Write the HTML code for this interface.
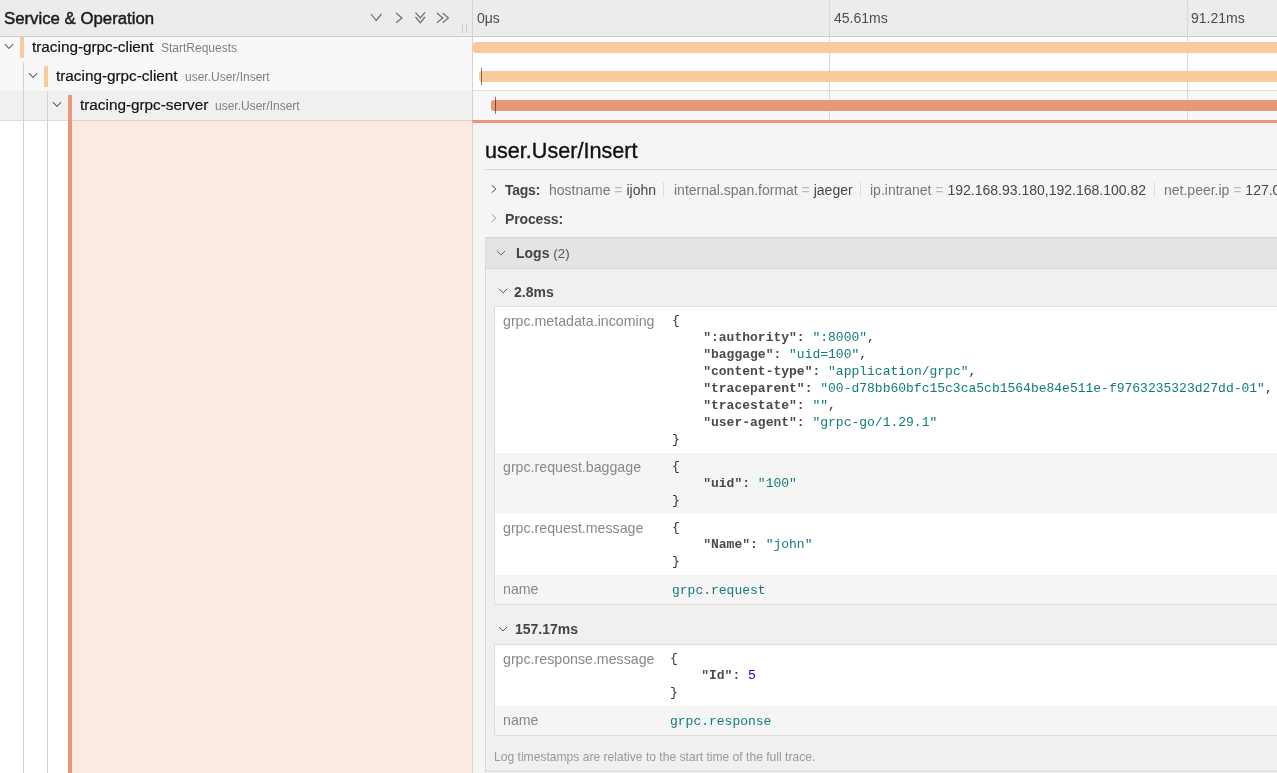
<!DOCTYPE html>
<html><head><meta charset="utf-8">
<style>
*{box-sizing:border-box;margin:0;padding:0}
html,body{width:1277px;height:773px;overflow:hidden;background:#fff;font-family:"Liberation Sans",sans-serif;color:#000}
.a{position:absolute;white-space:pre}
.t{position:absolute;white-space:pre;line-height:1;will-change:transform}
pre{will-change:transform}
.mono{font-family:"Liberation Mono",monospace}
</style></head><body>

<!-- LEFT ROWS -->
<div class="a" style="left:0;top:33px;width:472px;height:29px;background:#f8f8f8"></div>
<div class="a" style="left:0;top:62px;width:472px;height:29px;background:#f8f8f8"></div>
<div class="a" style="left:0;top:91px;width:472px;height:29px;background:#f0f0f0"></div>
<div class="a" style="left:0;top:120px;width:68px;height:1px;background:#ddd"></div><div class="a" style="left:72px;top:120px;width:400px;height:1px;background:#e0d3cd"></div>
<!-- detail left -->
<div class="a" style="left:72px;top:121px;width:400px;height:652px;background:#fbe9e2"></div>
<!-- guides -->
<div class="a" style="left:23px;top:62px;width:1px;height:711px;background:#d3d3d3"></div>
<div class="a" style="left:47px;top:91px;width:1px;height:682px;background:#d3d3d3"></div>
<!-- color bars -->
<div class="a" style="left:20px;top:37px;width:4px;height:21px;background:#f7cb9c"></div>
<div class="a" style="left:44px;top:66px;width:4px;height:21px;background:#f7cb9c"></div>
<div class="a" style="left:68px;top:95px;width:4px;height:678px;background:#e9967a"></div>

<!-- row chevrons -->
<svg class="a" style="left:0;top:33px" width="72" height="90" viewBox="0 0 72 90">
 <polyline points="5,11.2 9,15.5 13,11.2" fill="none" stroke="#222" stroke-width="1"/>
 <polyline points="29,40.2 33,44.5 37,40.2" fill="none" stroke="#222" stroke-width="1"/>
 <polyline points="53,69.2 57,73.5 61,69.2" fill="none" stroke="#222" stroke-width="1"/>
</svg>

<!-- row texts -->
<div class="t" style="left:32px;top:39px;font-size:15.3px;color:#111;-webkit-text-stroke:0.2px #111">tracing-grpc-client</div>
<div class="t" style="left:161px;top:42px;font-size:12px;color:#808080">StartRequests</div>
<div class="t" style="left:56px;top:68px;font-size:15.3px;color:#111;-webkit-text-stroke:0.2px #111">tracing-grpc-client</div>
<div class="t" style="left:185px;top:71px;font-size:12px;color:#808080">user.User/Insert</div>
<div class="t" style="left:80px;top:97px;font-size:15.3px;color:#111;-webkit-text-stroke:0.2px #111">tracing-grpc-server</div>
<div class="t" style="left:215px;top:100px;font-size:12px;color:#808080">user.User/Insert</div>

<!-- RIGHT ROWS -->
<div class="a" style="left:473px;top:90px;width:804px;height:1px;background:#ddd"></div>
<div class="a" style="left:473px;top:91px;width:804px;height:29px;background:#f8f8f8"></div>
<!-- ticks in rows -->
<div class="a" style="left:829px;top:37px;width:1px;height:83px;background:#d8d8d8"></div>
<div class="a" style="left:1187px;top:37px;width:1px;height:83px;background:#d8d8d8"></div>
<!-- span bars -->
<div class="a" style="left:473px;top:42px;width:820px;height:11px;border-radius:3px;background:#f7cb9c"></div>
<div class="a" style="left:479px;top:71px;width:820px;height:11px;border-radius:3px;background:#f7cb9c"></div>
<div class="a" style="left:491px;top:100px;width:820px;height:11px;border-radius:3px;background:#e9967a"></div>
<div class="a" style="left:481px;top:68px;width:1px;height:17px;background:rgba(0,0,0,.5)"></div>
<div class="a" style="left:495px;top:97px;width:1px;height:17px;background:rgba(0,0,0,.5)"></div>

<!-- DETAIL PANEL -->
<div class="a" style="left:472px;top:120px;width:805px;height:653px;background:#f5f5f5;border-left:1px solid #d3d3d3;border-top:3px solid #e9967a"></div>
<div class="t" style="left:485px;top:140px;font-size:21.6px;color:#111;-webkit-text-stroke:0.35px #111">user.User/Insert</div>
<div class="a" style="left:485px;top:169px;width:792px;height:1px;background:#d8d8d8"></div>

<!-- Tags -->
<svg class="a" style="left:488px;top:182px" width="12" height="44" viewBox="0 0 12 44">
 <polyline points="3.8,3.3 7.8,7 3.8,10.7" fill="none" stroke="#444" stroke-width="1"/>
 <polyline points="3.8,32.3 7.8,36.1 3.8,39.9" fill="none" stroke="#999" stroke-width="1"/>
</svg>
<div class="t" style="left:505px;top:183px;font-size:14px;color:#474747"><b style="color:#444;letter-spacing:-0.25px">Tags:</b></div>
<div class="t" style="left:549px;top:183px;font-size:14px;color:#474747"><span style="color:#777">hostname</span><span style="color:#bbb"> = </span>ijohn</div>
<div class="a" style="left:663px;top:182px;width:1px;height:15px;background:#ddd"></div>
<div class="t" style="left:674px;top:183px;font-size:14px;color:#474747"><span style="color:#777">internal.span.format</span><span style="color:#bbb"> = </span>jaeger</div>
<div class="a" style="left:860px;top:182px;width:1px;height:15px;background:#ddd"></div>
<div class="t" style="left:870px;top:183px;font-size:14px;color:#474747"><span style="color:#777">ip.intranet</span><span style="color:#bbb"> = </span>192.168.93.180,192.168.100.82</div>
<div class="a" style="left:1154px;top:182px;width:1px;height:15px;background:#ddd"></div>
<div class="t" style="left:1164px;top:183px;font-size:14px;color:#474747"><span style="color:#777">net.peer.ip</span><span style="color:#bbb"> = </span>127.0.0.1</div>
<div class="t" style="left:505px;top:212px;font-size:14px;color:#444"><b style="letter-spacing:-0.15px">Process:</b></div>

<!-- Logs box -->
<div class="a" style="left:485px;top:237px;width:800px;height:535px;border:1px solid #d8d8d8;background:#f0f0f0"></div>
<div class="a" style="left:486px;top:238px;width:791px;height:31px;background:#e4e4e4;border-bottom:1px solid #d8d8d8"></div>
<svg class="a" style="left:490px;top:240px" width="30" height="400" viewBox="0 0 30 400">
 <polyline points="7.2,11 11.1,14.9 15,11" fill="none" stroke="#555" stroke-width="0.95"/>
 <polyline points="9,48.8 13.1,52.9 17.2,48.8" fill="none" stroke="#555" stroke-width="0.95"/>
 <polyline points="9,387 13,391 17,387" fill="none" stroke="#555" stroke-width="0.95"/>
</svg>
<div class="t" style="left:516px;top:246px;font-size:14px;color:#444"><b>Logs</b> <span style="color:#555;font-size:13.3px">(2)</span></div>
<div class="t" style="left:514px;top:285px;font-size:14px;color:#444"><b>2.8ms</b></div>

<!-- table 1 -->
<div class="a" style="left:494px;top:306px;width:790px;height:299px;border:1px solid #ddd;background:#fff"></div>
<div class="a" style="left:495px;top:453px;width:782px;height:61px;background:#f5f5f5"></div>
<div class="a" style="left:495px;top:575px;width:782px;height:29px;background:#f5f5f5"></div>
<div class="t" style="left:503px;top:314px;font-size:14.2px;color:#888">grpc.metadata.incoming</div>
<div class="t" style="left:503px;top:460px;font-size:14.2px;color:#888">grpc.request.baggage</div>
<div class="t" style="left:503px;top:521px;font-size:14.2px;color:#888">grpc.request.message</div>
<div class="t" style="left:503px;top:582px;font-size:14.2px;color:#888">name</div>

<pre class="a mono" style="left:672px;top:312px;font-size:13px;line-height:17px;color:#333">{
    <b style="color:#4a4a4a">":authority":</b> <span style="color:#117c7c">":8000"</span>,
    <b style="color:#4a4a4a">"baggage":</b> <span style="color:#117c7c">"uid=100"</span>,
    <b style="color:#4a4a4a">"content-type":</b> <span style="color:#117c7c">"application/grpc"</span>,
    <b style="color:#4a4a4a">"traceparent":</b> <span style="color:#117c7c">"00-d78bb60bfc15c3ca5cb1564be84e511e-f9763235323d27dd-01"</span>,
    <b style="color:#4a4a4a">"tracestate":</b> <span style="color:#117c7c">""</span>,
    <b style="color:#4a4a4a">"user-agent":</b> <span style="color:#117c7c">"grpc-go/1.29.1"</span>
}</pre>
<pre class="a mono" style="left:672px;top:458px;font-size:13px;line-height:17px;color:#333">{
    <b style="color:#4a4a4a">"uid":</b> <span style="color:#117c7c">"100"</span>
}</pre>
<pre class="a mono" style="left:672px;top:519px;font-size:13px;line-height:17px;color:#333">{
    <b style="color:#4a4a4a">"Name":</b> <span style="color:#117c7c">"john"</span>
}</pre>
<pre class="a mono" style="left:672px;top:582px;font-size:13px;line-height:17px;color:#117c7c">grpc.request</pre>

<div class="t" style="left:515px;top:622px;font-size:14px;color:#444"><b>157.17ms</b></div>

<!-- table 2 -->
<div class="a" style="left:494px;top:644px;width:790px;height:92px;border:1px solid #ddd;background:#fff"></div>
<div class="a" style="left:495px;top:706px;width:782px;height:29px;background:#f5f5f5"></div>
<div class="t" style="left:503px;top:652px;font-size:14.2px;color:#888">grpc.response.message</div>
<div class="t" style="left:503px;top:713px;font-size:14.2px;color:#888">name</div>
<pre class="a mono" style="left:670px;top:650px;font-size:13px;line-height:17px;color:#333">{
    <b style="color:#4a4a4a">"Id":</b> <span style="color:blue">5</span>
}</pre>
<pre class="a mono" style="left:670px;top:713px;font-size:13px;line-height:17px;color:#117c7c">grpc.response</pre>

<div class="t" style="left:494px;top:751px;font-size:12.1px;color:#999">Log timestamps are relative to the start time of the full trace.</div>

<!-- HEADER -->
<div class="a" style="left:0;top:0;width:1277px;height:37px;background:#ececec;border-bottom:1px solid #ccc"></div>
<div class="a" style="left:829px;top:0;width:1px;height:37px;background:#d8d8d8"></div>
<div class="a" style="left:1187px;top:0;width:1px;height:37px;background:#d8d8d8"></div>
<div class="t" style="left:4px;top:11px;font-size:16.8px;color:#1a1a1a;-webkit-text-stroke:0.45px #1a1a1a">Service &amp; Operation</div>
<svg class="a" style="left:360px;top:0" width="100" height="37" viewBox="360 0 100 37">
 <g fill="none" stroke="#6f6f6f" stroke-width="1.2">
  <polyline points="371,14 376.2,20.5 381.5,14"/>
  <polyline points="396,13 402,18 396,22.8"/>
  <polyline points="415.5,12.3 420.3,18 425,12.3"/>
  <polyline points="415.5,17 420.3,22.7 425,17"/>
  <polyline points="437,13 442.7,18 437,22.8"/>
  <polyline points="442.7,13 448.4,18 442.7,22.8"/>
 </g>
</svg>
<div class="a" style="left:462px;top:24px;width:1px;height:9px;background:#ccc"></div>
<div class="a" style="left:466px;top:24px;width:1px;height:9px;background:#ccc"></div>
<div class="a" style="left:472px;top:0;width:1px;height:120px;background:#d3d3d3"></div>
<div class="t" style="left:477px;top:11px;font-size:14px;color:#4d4d4d">0μs</div>
<div class="t" style="left:834px;top:11px;font-size:14px;color:#4d4d4d">45.61ms</div>
<div class="t" style="left:1191px;top:11px;font-size:14px;color:#4d4d4d">91.21ms</div>

</body></html>
